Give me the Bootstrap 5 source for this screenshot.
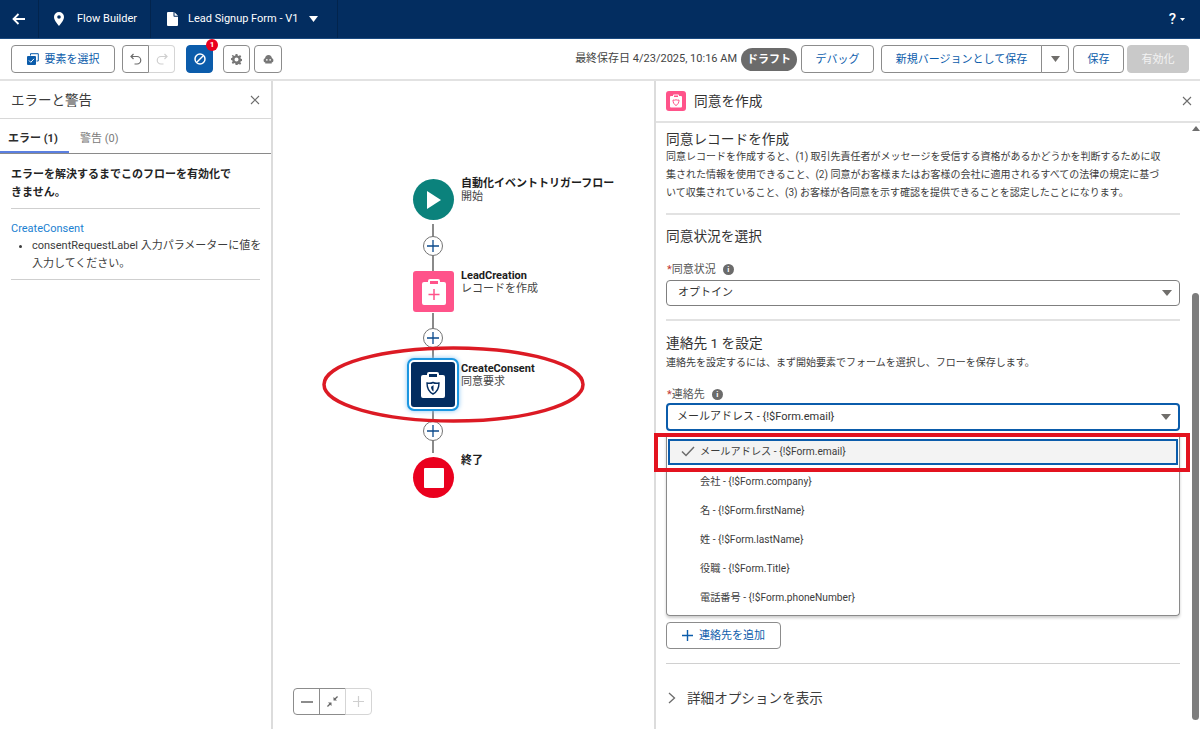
<!DOCTYPE html>
<html lang="ja">

<head>
    <meta charset="UTF-8">
    <meta name="viewport" content="width=device-width, initial-scale=1">
    <title>Flow Builder</title>
    <link href="https://cdn.jsdelivr.net/npm/bootstrap@5.3.0/dist/css/bootstrap.min.css" rel="stylesheet">
    <style>
        html, body { height: 100%; }
        body { font-family: Roboto, "Noto Sans CJK JP", sans-serif; font-size: 11px; color: #2e2e2e; overflow: hidden; background: #fff; }

        /* top bar */
        .app-bar { height: 39px; background: #032d60; color: #fff; border-bottom: 1px solid #1b4a80; }
        .app-tab { height: 38px; border-right: 1px solid #02244d; display: flex; align-items: center; }
        .tab-back { width: 39px; justify-content: center; }
        .tab-app { width: 112px; padding-left: 15px; gap: 13px; }
        .tab-file { width: 187px; padding-left: 16px; gap: 10px; }
        .file-caret { margin-left: 1px; }
        .help-mark { font-size: 15px; font-weight: 500; margin-right: 15px; }

        /* toolbar */
        .tool-bar { height: 42px; border-bottom: 2px solid #e2e2e2; padding: 0 11px; }
        .tool-btn { height: 28px; font-size: 11px; line-height: 1; padding: 0; color: #0b5cab; background: #fff; border: 1px solid #8c8c8c; border-radius: 4px; display: inline-flex; align-items: center; justify-content: center; --bs-btn-hover-color: #0b5cab; }
        .btn-pick { width: 104px; gap: 6px; margin-right: 7px; }
        .undo-left { width: 27px; border-radius: 4px 0 0 4px; }
        .undo-right { width: 26px; border-radius: 0 4px 4px 0; border-color: #d5d5d5; border-left: 0; }
        .btn-err { width: 27px; margin-left: 11px; background: #0b5cab; border-color: #0b5cab; }
        .btn-err:hover { background: #0b5cab; border-color: #0b5cab; }
        .err-count { top: 0; left: 100%; width: 12px; height: 12px; padding: 0; font-size: 8px; line-height: 12px; background: #ea001e; border-radius: 50%; }
        .btn-gear { width: 27px; margin-left: 10px; }
        .btn-head { width: 28px; margin-left: 4px; }
        .saved-note { color: #444; margin-right: 4px; white-space: nowrap; }
        .draft-pill { width: 56px; height: 23px; line-height: 23px; padding: 0; margin-right: 4px; font-size: 11px; background: #6b6b6b; border-radius: 12px; }
        .btn-debug { width: 73px; margin-right: 7px; }
        .btn-newver { width: 161px; border-radius: 4px 0 0 4px; }
        .btn-newcaret { width: 28px; border-radius: 0 4px 4px 0; border-left: 1px solid #8c8c8c; margin-left: -1px; margin-right: 4px; }
        .btn-save { width: 51px; margin-right: 3px; }
        .btn-activate { width: 62px; background: #c9c9c9; border-color: #c9c9c9; color: #f3f3f3; }
        .btn-activate:disabled { background: #c9c9c9; border-color: #c9c9c9; color: #f3f3f3; opacity: 1; }

        /* columns */
        .work-area { height: 649px; }
        .side-left { width: 273px; border-right: 2px solid #dcdcdc; }
        .flow-canvas { width: 381px; }
        .side-right { width: 546px; border-left: 2px solid #dcdcdc; }
        .close-mark { color: #6d6d6d; line-height: 0; }

        /* left panel */
        .left-head { height: 38px; padding: 1px 11px 0; border-bottom: 1px solid #d8d8d8; }
        .left-title { font-size: 13.5px; font-weight: 400; margin: 0; color: #3c3c3c; }
        .err-tabs { height: 35px; border-bottom: 1px solid #8a8a8a; gap: 11px; padding-top: 3px; }
        .err-tabs .nav-link { border: 0; padding: 0; height: 31px; line-height: 33px; font-size: 11px; color: #7a7a7a; border-radius: 0; }
        .err-tabs .tab-on { width: 69px; padding-left: 8px; font-weight: 700; color: #2e2e2e; border-bottom: 2px solid #5b7fe0; }
        .left-body { padding: 12px 11px 0 11px; width: 271px; }
        .err-lead { font-weight: 700; line-height: 18px; margin: 0; padding-bottom: 6px; border-bottom: 1px solid #cfcfcf; color: #242424; }
        .err-item { padding: 12px 0 6px; border-bottom: 1px solid #cfcfcf; line-height: 18px; }
        .err-link { color: #1b7fd1; text-decoration: none; display: block; line-height: 16px; }
        .err-item ul { margin: 0; padding-left: 21px; color: #3c3c3c; white-space: nowrap; }

        /* flow diagram */
        .flow-line { position: absolute; left: 159px; width: 2px; background: #8a8a8a; }
        .line-a { top: 143px; height: 47px; }
        .line-b { top: 232px; height: 47px; }
        .line-c { top: 328px; height: 44px; }
        .flow-plus { position: absolute; left: 150px; width: 20px; height: 20px; background: #fff; border: 1px solid #747474; border-radius: 50%; display: flex; align-items: center; justify-content: center; }
        .plus-a { top: 155px; }
        .plus-b { top: 247px; }
        .plus-c { top: 340px; }
        .flow-node { position: absolute; left: 140px; width: 41px; height: 41px; display: flex; align-items: center; justify-content: center; }
        .node-start { top: 98px; background: #0b827c; border-radius: 50%; }
        .node-lead { top: 190px; background: #ff538a; border-radius: 3px; }
        .node-consent { top: 279px; left: 136px; width: 48px; height: 49px; background: #032d60; border: 2px solid #fff; border-radius: 5px; outline: 2px solid #1b96e0; box-shadow: 0 0 5px 2px #8ac6f2; }
        .node-end { top: 376px; background: #ea001e; border-radius: 50%; }
        .end-square { width: 20px; height: 20px; background: #fff; border-radius: 1px; }
        .flow-label { position: absolute; left: 188px; line-height: 13px; white-space: nowrap; color: #444; }
        .flow-label b { display: block; color: #1d1d1d; }
        .label-start { top: 96px; }
        .label-lead { top: 188px; }
        .label-consent { top: 281px; }
        .label-end { top: 373px; }
        .mark-ellipse { position: absolute; left: 49px; top: 265px; }
        .zoom-group { position: absolute; left: 20px; top: 607px; }
        .zoom-btn { width: 27px; height: 27px; padding: 0; background: #fff; border: 1px solid #8c8c8c; display: flex; align-items: center; justify-content: center; border-radius: 0; }
        .zoom-btn + .zoom-btn { margin-left: -1px; }
        .zoom-btn:first-child { border-radius: 4px 0 0 4px; }
        .zoom-btn:last-child { border-radius: 0 4px 4px 0; border-color: #d5d5d5; }

        /* right panel */
        .right-head { height: 42px; padding: 0 8px 0 10px; border-bottom: 2px solid #e2e2e2; gap: 8px; }
        .head-icon { width: 20px; height: 20px; background: #ff538a; border-radius: 3px; display: flex; align-items: center; justify-content: center; }
        .right-title { font-size: 13.7px; font-weight: 400; margin: 0; color: #333; }
        .right-scroll { height: 607px; overflow: hidden; }
        .right-body { width: 536px; padding: 7px 0 0 10px; }
        .sec-title { font-size: 13.7px; font-weight: 400; line-height: 18px; margin: 0; color: #333; }
        .sec-text { font-size: 10px; line-height: 18px; margin: 0; color: #3c3c3c; white-space: nowrap; }
        .sec-sub { margin-top: 2px; }
        .rule { height: 2px; width: 514px; background: #e2e2e2; }
        .rule-a { margin: 11px 0 12px; }
        .rule-b { margin: 13px 0 13px; }
        .field-label { height: 13px; margin: 0 0 2px 1px; line-height: 13px; color: #555; display: flex; align-items: center; gap: 7px; font-size: 11px; }
        .label-status { margin-top: 18px; margin-bottom: 4px; }
        .req { color: #c23934; }
        .info-dot { width: 11px; height: 11px; border-radius: 50%; background: #6b6b6b; color: #fff; font-size: 8px; line-height: 11px; font-weight: 700; text-align: center; }
        .pick-box { width: 514px; height: 26px; padding: 0 30px 0 11px; font-size: 11px; color: #333; border: 1px solid #7f7f7f; border-radius: 4px; background-size: 10px 6px; background-position: right 7px center; background-image: url("data:image/svg+xml,%3Csvg xmlns='http://www.w3.org/2000/svg' viewBox='0 0 10 6'%3E%3Cpath fill='%23706e6b' d='M0 0h10L5 6z'/%3E%3C/svg%3E"); }
        .pick-open { border: 2px solid #0b5cab; height: 28px; padding-left: 9px; }
        .pick-list { width: 514px; height: 183px; margin-top: 2px; border: 1px solid #8a8a8a; border-top-color: #d0d0d0; border-radius: 0 0 4px 4px; box-shadow: 0 2px 3px rgba(0,0,0,.2); padding-top: 4px; }
        .pick-item { height: 29px; border: 0; padding: 0 0 0 33px; font-size: 10.2px; line-height: 29px; color: #3c3c3c; background: transparent; }
        .pick-on { width: 510px; height: 26px; line-height: 22px; margin: 1px 0 2px 1px; padding-left: 30px; background: #f3f3f3; border: 2px solid #0b5cab; border-radius: 0; position: relative; }
        .pick-check { position: absolute; left: 11px; top: 5px; }
        .btn-addcontact { width: 115px; height: 27px; margin-top: 6px; gap: 6px; }
        .rule-c { height: 1px; width: 514px; background: #d0d0d0; margin: 14px 0 25px; }
        .more-row { font-size: 13.6px; line-height: 18px; gap: 11px; color: #3c3c3c; padding-left: 2px; }

        /* red box from the annotation */
        .mark-box { position: absolute; left: 654px; top: 433px; width: 536px; height: 39px; border: 4px solid #e3131f; pointer-events: none; }

        /* fake scrollbar */
        .fake-scroll { width: 8px; position: relative; }
        .scroll-up { position: absolute; left: 0; top: 3px; width: 0; height: 0; border: 4px solid transparent; border-top: 0; border-bottom: 5px solid #6e6e6e; }
        .scroll-thumb { position: absolute; left: 0; right: 1px; top: 170px; height: 427px; background: #7d7d7d; border-radius: 4px; }
    </style>
</head>

<body>
    <header class="app-bar d-flex align-items-center">
        <div class="app-tab tab-back">
            <svg width="14" height="12" viewBox="0 0 14 12"><path d="M13 6H2M6.500 1 1.500 6l5 5" fill="none" stroke="#fff" stroke-width="1.800"/></svg>
        </div>
        <div class="app-tab tab-app">
            <svg width="10" height="14" viewBox="0 0 10 14"><path fill="#fff" fill-rule="evenodd" d="M5 0a5 5 0 0 0-5 5c0 3.500 5 9 5 9s5-5.500 5-9a5 5 0 0 0-5-5zm0 3.200a1.800 1.800 0 1 1 0 3.600 1.800 1.800 0 0 1 0-3.600z"/></svg>
            <span>Flow Builder</span>
        </div>
        <div class="app-tab tab-file">
            <svg width="11" height="14" viewBox="0 0 11 14"><path fill="#fff" d="M1 0h5.500v4a.8.8 0 0 0 .8.8H11V13a1 1 0 0 1-1 1H1a1 1 0 0 1-1-1V1a1 1 0 0 1 1-1zm6.500.2L11 3.800H7.500z"/></svg>
            <span>Lead Signup Form - V1</span>
            <svg class="file-caret" width="9" height="6" viewBox="0 0 9 6"><path fill="#fff" d="M0 0h9L4.500 6z"/></svg>
        </div>
        <div class="ms-auto d-flex align-items-center gap-1 help-mark">
            <span>?</span>
            <svg width="5" height="3" viewBox="0 0 5 3"><path fill="#fff" d="M0 0h5L2.500 3z"/></svg>
        </div>
    </header>

    <div class="tool-bar d-flex align-items-center">
        <button type="button" class="btn tool-btn btn-pick">
            <svg width="12" height="12" viewBox="0 0 12 12"><path fill="none" stroke="#0b5cab" d="M3.500 2.500V.7h7.800v7.300H9.500"/><rect y="3" width="9" height="9" rx="1" fill="#0b5cab"/><path d="m2 7.500 1.800 1.800L7 5.800" fill="none" stroke="#fff"/></svg>
            要素を選択
        </button>
        <div class="d-flex">
            <button type="button" class="btn tool-btn undo-left">
                <svg width="12" height="12" viewBox="0 0 12 12"><path d="M3.500 1 1 3.500 3.500 6M1.500 3.500H7a3.700 3.700 0 0 1 0 7.500H4.500" fill="none" stroke="#6b6b6b" stroke-width="1.200"/></svg>
            </button>
            <button type="button" class="btn tool-btn undo-right">
                <svg width="12" height="12" viewBox="0 0 12 12"><path d="M8.500 1 11 3.500 8.500 6M10.500 3.500H5a3.700 3.700 0 0 0 0 7.500h2.500" fill="none" stroke="#cfcfcf" stroke-width="1.200"/></svg>
            </button>
        </div>
        <button type="button" class="btn tool-btn btn-err position-relative">
            <svg width="12" height="12" viewBox="0 0 12 12"><circle cx="6" cy="6" r="5" fill="none" stroke="#fff" stroke-width="1.500"/><path d="M3 9l6-6" stroke="#fff" stroke-width="1.500"/></svg>
            <span class="badge err-count position-absolute translate-middle">1</span>
        </button>
        <button type="button" class="btn tool-btn btn-gear">
            <svg width="11" height="11" viewBox="0 0 12 12"><path fill="#777" fill-rule="evenodd" d="M5 0h2l.3 1.600 1.200.5L9.900 1.200l1.300 1.500-1 1.300.5 1.200 1.300.3v2l-1.300.3-.5 1.200 1 1.300-1.300 1.500-1.400-.9-1.200.5L7 12H5l-.3-1.600-1.200-.5-1.400.9L.8 9.300l1-1.300-.5-1.200L0 6.500v-2l1.300-.3.500-1.200-1-1.300L2.100 1.200l1.400.9 1.200-.5zM6 3.800a2 2 0 1 0 0 4.400 2 2 0 0 0 0-4.400z"/></svg>
        </button>
        <button type="button" class="btn tool-btn btn-head">
            <svg width="11" height="9" viewBox="0 0 12 11"><path fill="#777" fill-rule="evenodd" d="M6 0C3.500 0 2 1.800 1.800 4 .7 4.300 0 5.200 0 6.300 0 8 1 9 2 9v1.500h8V9c1 0 2-1 2-2.700 0-1.100-.7-2-1.800-2.300C10 1.800 8.500 0 6 0zM4 5a1 1 0 1 1 0 2 1 1 0 0 1 0-2zm4 0a1 1 0 1 1 0 2 1 1 0 0 1 0-2z"/></svg>
        </button>

        <span class="saved-note ms-auto">最終保存日 4/23/2025, 10:16 AM</span>
        <span class="badge draft-pill">ドラフト</span>
        <button type="button" class="btn tool-btn btn-debug">デバッグ</button>
        <div class="d-flex">
            <button type="button" class="btn tool-btn btn-newver">新規バージョンとして保存</button>
            <button type="button" class="btn tool-btn btn-newcaret">
                <svg width="9" height="6" viewBox="0 0 9 6"><path fill="#706e6b" d="M0 0h9L4.500 6z"/></svg>
            </button>
        </div>
        <button type="button" class="btn tool-btn btn-save">保存</button>
        <button type="button" class="btn tool-btn btn-activate" disabled>有効化</button>
    </div>

    <main class="work-area d-flex">
        <!-- errors and warnings -->
        <aside class="side-left flex-shrink-0">
            <div class="left-head d-flex align-items-center justify-content-between">
                <h2 class="left-title">エラーと警告</h2>
                <span class="close-mark">
                    <svg width="10" height="10" viewBox="0 0 10 10"><path d="M1 1l8 8M9 1 1 9" stroke="currentColor" stroke-width="1.100"/></svg>
                </span>
            </div>
            <ul class="nav err-tabs">
                <li class="nav-item"><a class="nav-link tab-on" href="#">エラー (1)</a></li>
                <li class="nav-item"><a class="nav-link" href="#">警告 (0)</a></li>
            </ul>
            <div class="left-body">
                <p class="err-lead">エラーを解決するまでこのフローを有効化で<br>きません。</p>
                <div class="err-item">
                    <a class="err-link" href="#">CreateConsent</a>
                    <ul>
                        <li>consentRequestLabel 入力パラメーターに値を<br>入力してください。</li>
                    </ul>
                </div>
            </div>
        </aside>

        <!-- flow diagram, nodes sit on a free canvas -->
        <section class="flow-canvas position-relative flex-shrink-0">
            <div class="flow-line line-a"></div>
            <div class="flow-line line-b"></div>
            <div class="flow-line line-c"></div>

            <div class="flow-node node-start">
                <svg width="16" height="20" viewBox="0 0 16 20"><path fill="#fff" d="M1 1v18l14-9z"/></svg>
            </div>
            <div class="flow-label label-start"><b>自動化イベントトリガーフロー</b>開始</div>

            <div class="flow-plus plus-a">
                <svg width="12" height="12" viewBox="0 0 12 12"><path d="M6 0v12M0 6h12" stroke="#0b4a8c" stroke-width="1.300"/></svg>
            </div>

            <div class="flow-node node-lead">
                <svg width="24" height="26" viewBox="0 0 24 26"><path fill="#fff" fill-rule="evenodd" d="M2 3h4V2a2 2 0 0 1 2-2h8a2 2 0 0 1 2 2v1h4a2 2 0 0 1 2 2v19a2 2 0 0 1-2 2H2a2 2 0 0 1-2-2V5a2 2 0 0 1 2-2zM8 2v3h8V2z"/><path d="M12 10v11M6.500 15.500h11" stroke="#ff538a" stroke-width="1.500"/></svg>
            </div>
            <div class="flow-label label-lead"><b>LeadCreation</b>レコードを作成</div>

            <div class="flow-plus plus-b">
                <svg width="12" height="12" viewBox="0 0 12 12"><path d="M6 0v12M0 6h12" stroke="#0b4a8c" stroke-width="1.300"/></svg>
            </div>

            <div class="flow-node node-consent">
                <svg width="24" height="26" viewBox="0 0 24 26"><path fill="#fff" fill-rule="evenodd" d="M2 3h4V2a2 2 0 0 1 2-2h8a2 2 0 0 1 2 2v1h4a2 2 0 0 1 2 2v19a2 2 0 0 1-2 2H2a2 2 0 0 1-2-2V5a2 2 0 0 1 2-2zM8 2v3h8V2z"/><path d="M12 10.500c2 1 3.500 1 6 .5 0 5-2 9-6 11-4-2-6-6-6-11 2.500.5 4 .5 6-.5z" fill="none" stroke="#032d60" stroke-width="1.400"/><path d="M12.500 13v6.500c-1.500-1-2.500-2.500-2.500-5 1 0 1.700-.7 2.500-1.500z" fill="#032d60"/></svg>
            </div>
            <div class="flow-label label-consent"><b>CreateConsent</b>同意要求</div>

            <div class="flow-plus plus-c">
                <svg width="12" height="12" viewBox="0 0 12 12"><path d="M6 0v12M0 6h12" stroke="#0b4a8c" stroke-width="1.300"/></svg>
            </div>

            <div class="flow-node node-end"><div class="end-square"></div></div>
            <div class="flow-label label-end"><b>終了</b></div>

            <svg class="mark-ellipse" width="263" height="77" viewBox="0 0 263 77"><ellipse cx="131.500" cy="38.500" rx="129.500" ry="36.500" fill="none" stroke="#dc1a24" stroke-width="3.500"/></svg>

            <div class="zoom-group d-flex">
                <button type="button" class="btn zoom-btn">
                    <svg width="12" height="2" viewBox="0 0 12 2"><path d="M0 1h12" stroke="#666" stroke-width="1.500"/></svg>
                </button>
                <button type="button" class="btn zoom-btn">
                    <svg width="11" height="11" viewBox="0 0 11 11"><path fill="#666" d="M6.500 1v3.500H10L8.700 3.200 11 .9 10.100 0 7.800 2.300zM4.500 10V6.500H1l1.300 1.300L0 10.100l.9.900 2.300-2.300z"/></svg>
                </button>
                <button type="button" class="btn zoom-btn">
                    <svg width="11" height="11" viewBox="0 0 11 11"><path d="M5.500 0v11M0 5.500h11" stroke="#cfcfcf" stroke-width="1.200"/></svg>
                </button>
            </div>
        </section>

        <!-- consent settings -->
        <aside class="side-right flex-shrink-0">
            <div class="right-head d-flex align-items-center">
                <div class="head-icon">
                    <svg width="12" height="14" viewBox="0 0 24 26"><path fill="#fff" fill-rule="evenodd" d="M2 3h4V2a2 2 0 0 1 2-2h8a2 2 0 0 1 2 2v1h4a2 2 0 0 1 2 2v19a2 2 0 0 1-2 2H2a2 2 0 0 1-2-2V5a2 2 0 0 1 2-2zM8 2v3h8V2z"/><path d="M12 10.500c2 1 3.500 1 6 .5 0 5-2 9-6 11-4-2-6-6-6-11 2.500.5 4 .5 6-.5z" fill="none" stroke="#ff538a" stroke-width="2"/></svg>
                </div>
                <h2 class="right-title">同意を作成</h2>
                <span class="close-mark ms-auto">
                    <svg width="10" height="10" viewBox="0 0 10 10"><path d="M1 1l8 8M9 1 1 9" stroke="currentColor" stroke-width="1.100"/></svg>
                </span>
            </div>
            <div class="right-scroll d-flex justify-content-between">
                <div class="right-body">
                    <h3 class="sec-title">同意レコードを作成</h3>
                    <p class="sec-text">同意レコードを作成すると、(1) 取引先責任者がメッセージを受信する資格があるかどうかを判断するために収<br>集された情報を使用できること、(2) 同意がお客様またはお客様の会社に適用されるすべての法律の規定に基づ<br>いて収集されていること、(3) お客様が各同意を示す確認を提供できることを認定したことになります。</p>
                    <div class="rule rule-a"></div>

                    <h3 class="sec-title">同意状況を選択</h3>
                    <div class="field-label label-status"><span><span class="req">*</span>同意状況</span><span class="info-dot">i</span></div>
                    <select class="form-select pick-box" aria-label="同意状況">
                        <option>オプトイン</option>
                    </select>
                    <div class="rule rule-b"></div>

                    <h3 class="sec-title">連絡先 1 を設定</h3>
                    <p class="sec-text sec-sub">連絡先を設定するには、まず開始要素でフォームを選択し、フローを保存します。</p>
                    <div class="field-label mt-3"><span><span class="req">*</span>連絡先</span><span class="info-dot">i</span></div>
                    <select class="form-select pick-box pick-open" aria-label="連絡先">
                        <option>メールアドレス - {!$Form.email}</option>
                    </select>
                    <div class="list-group pick-list">
                        <div class="list-group-item pick-item pick-on">
                            <svg class="pick-check" width="14" height="11" viewBox="0 0 14 11"><path d="M1 5.500 5 9.500 13 1" fill="none" stroke="#6b6b6b" stroke-width="1.500"/></svg>
                            メールアドレス - {!$Form.email}
                        </div>
                        <div class="list-group-item pick-item">会社 - {!$Form.company}</div>
                        <div class="list-group-item pick-item">名 - {!$Form.firstName}</div>
                        <div class="list-group-item pick-item">姓 - {!$Form.lastName}</div>
                        <div class="list-group-item pick-item">役職 - {!$Form.Title}</div>
                        <div class="list-group-item pick-item">電話番号 - {!$Form.phoneNumber}</div>
                    </div>
                    <button type="button" class="btn tool-btn btn-addcontact">
                        <svg width="11" height="11" viewBox="0 0 11 11"><path d="M5.500 0v11M0 5.500h11" stroke="#0b5cab" stroke-width="1.400"/></svg>
                        連絡先を追加
                    </button>
                    <div class="rule-c"></div>
                    <div class="more-row d-flex align-items-center">
                        <svg width="8" height="12" viewBox="0 0 8 12"><path d="M1 1l5.500 5L1 11" fill="none" stroke="#6b6b6b" stroke-width="1.300"/></svg>
                        詳細オプションを表示
                    </div>
                </div>
                <div class="fake-scroll">
                    <span class="scroll-up"></span>
                    <span class="scroll-thumb"></span>
                </div>
            </div>
        </aside>
    </main>

    <div class="mark-box"></div>

    <script src="https://cdn.jsdelivr.net/npm/bootstrap@5.3.0/dist/js/bootstrap.bundle.min.js"></script>
</body>

</html>
